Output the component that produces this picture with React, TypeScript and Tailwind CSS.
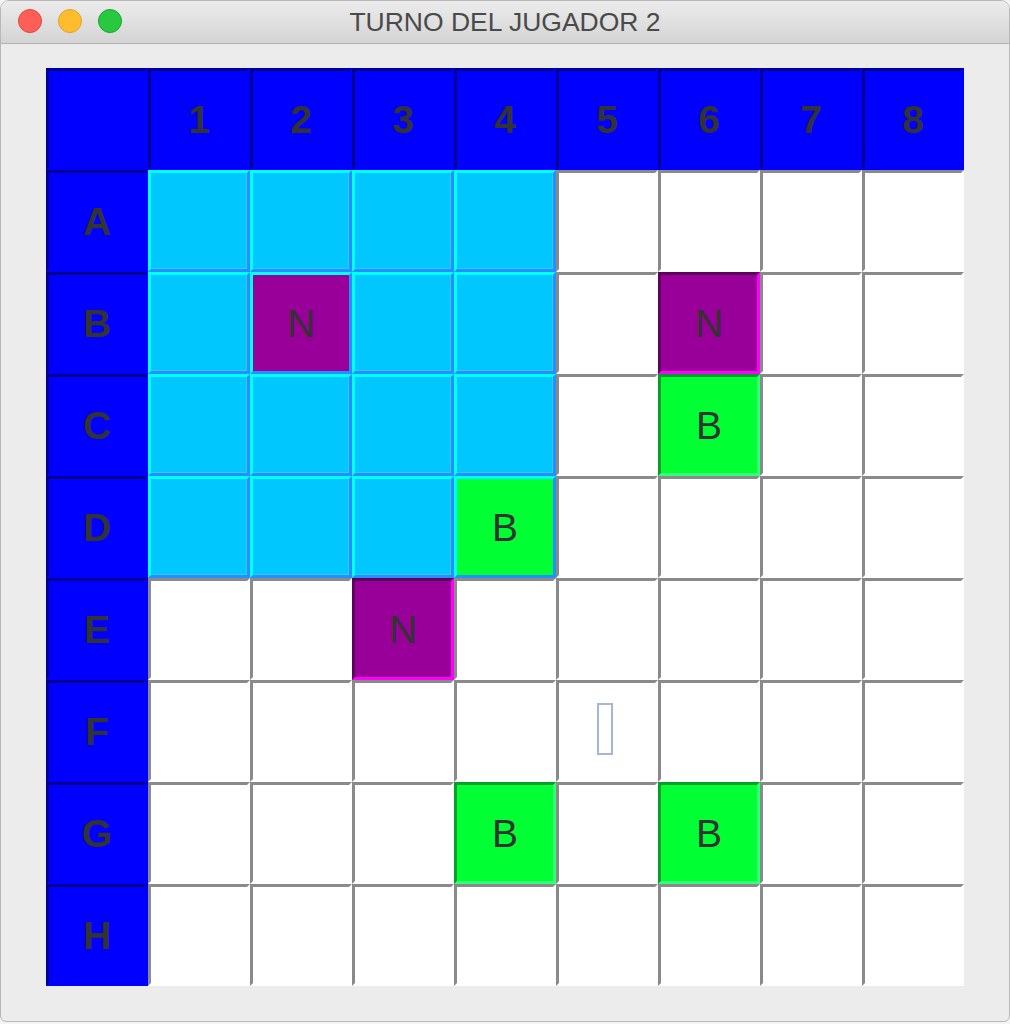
import React from "react";

type Kind = "head" | "empty" | "water" | "n" | "b" | "waterN" | "waterB";

// bevelled "button" look per kind: top/left shadow, bottom/right highlight
const CELL_CLASS: Record<Kind, string> = {
  head: "bg-[#0000ff] border-[3px] border-t-[#000090] border-l-[#000090] border-r-[#0000ff] border-b-[#0000ff] font-bold",
  empty:
    "bg-white border-[3px] border-t-[#8a8a8a] border-l-[#8a8a8a] border-r-white border-b-white",
  water:
    "bg-[#00c8ff] border-[3px] border-t-[#00ffff] border-l-[#00ffff] border-r-[#2290ff] border-b-[#2290ff] shadow-[inset_-1px_-1px_0_0_#3cc6ff]",
  waterN:
    "bg-[#990099] border-[3px] border-t-[#00ffff] border-l-[#00ffff] border-r-[#2290ff] border-b-[#2290ff]",
  waterB:
    "bg-[#00ff33] border-[3px] border-t-[#00ffff] border-l-[#00ffff] border-r-[#2290ff] border-b-[#2290ff]",
  n: "bg-[#990099] border-[3px] border-t-[#5c005c] border-l-[#5c005c] border-r-[#ff00ff] border-b-[#ff00ff]",
  b: "bg-[#00ff33] border-[3px] border-t-[#00a028] border-l-[#00a028] border-r-[#33ff77] border-b-[#33ff77]",
};

const ROWS = ["A", "B", "C", "D", "E", "F", "G", "H"];
const COLS = [1, 2, 3, 4, 5, 6, 7, 8];

const SHIPS: Record<string, "N" | "B"> = {
  B2: "N",
  B6: "N",
  E3: "N",
  C6: "B",
  D4: "B",
  G4: "B",
  G6: "B",
};

function Cell({ kind, label, cursor }: { kind: Kind; label?: string; cursor?: boolean }) {
  return (
    <div className={`flex h-[102px] w-[102px] items-center justify-center text-[39px] leading-none text-[#333333] ${CELL_CLASS[kind]}`}>
      {label}
      {cursor && <div className="-ml-1 -mt-1 h-[52px] w-[16px] border-2 border-[#a5b8d3]" />}
    </div>
  );
}

function kindFor(row: number, col: number): Kind {
  const ship = SHIPS[`${ROWS[row]}${col}`];
  const water = row < 4 && col <= 4;
  if (ship === "N") return water ? "waterN" : "n";
  if (ship === "B") return water ? "waterB" : "b";
  return water ? "water" : "empty";
}

export default function App() {
  return (
    <div className="h-[1024px] w-[1010px] bg-[#f4f4f4] font-['Liberation_Sans',Arial,sans-serif]">
      <div className="flex h-[1022px] flex-col overflow-hidden rounded-t-[9px] rounded-b-[6px] border border-[#b8b8b8] bg-[#ececec]">
        {/* title bar */}
        <div className="relative flex h-[43px] shrink-0 items-center justify-center border-b border-[#b2b2b2] bg-gradient-to-b from-[#ececec] to-[#d4d4d4]">
          <div className="absolute left-[17px] top-[8px] flex gap-[16px]">
            <span className="h-[24px] w-[24px] rounded-full border border-[#e0443e] bg-[#ff5f57]" />
            <span className="h-[24px] w-[24px] rounded-full border border-[#dea123] bg-[#ffbd2e]" />
            <span className="h-[24px] w-[24px] rounded-full border border-[#17a42d] bg-[#28c940]" />
          </div>
          <span className="text-[26.5px] leading-none text-[#4a4a4a]">TURNO DEL JUGADOR 2</span>
        </div>

        {/* board */}
        <div className="pl-[45px] pt-[24px]">
          <div className="grid w-[918px] grid-cols-9">
            <Cell kind="head" />
            {COLS.map((c) => (
              <Cell key={`h${c}`} kind="head" label={String(c)} />
            ))}
            {ROWS.map((r, ri) => (
              <React.Fragment key={r}>
                <Cell kind="head" label={r} />
                {COLS.map((c) => (
                  <Cell
                    key={`${r}${c}`}
                    kind={kindFor(ri, c)}
                    label={SHIPS[`${r}${c}`]}
                    cursor={r === "F" && c === 5}
                  />
                ))}
              </React.Fragment>
            ))}
          </div>
        </div>
      </div>
    </div>
  );
}
